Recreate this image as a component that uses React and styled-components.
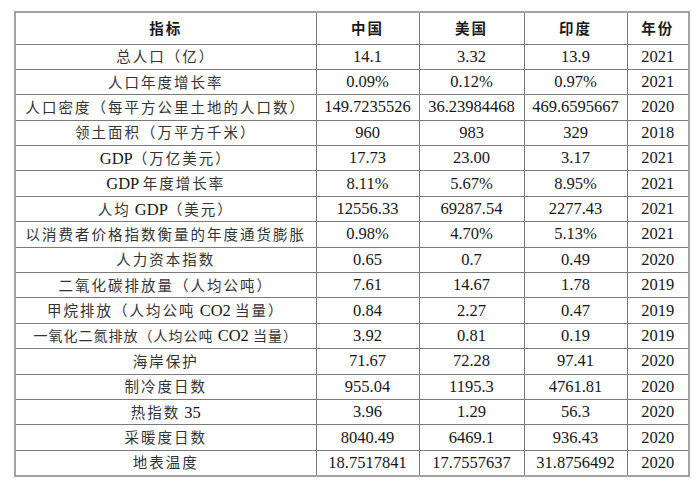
import React from "react";
import styled, { createGlobalStyle } from "styled-components";

const Global = createGlobalStyle`
  html, body { margin: 0; padding: 0; background: #ffffff; }
  body { font-family: "Liberation Serif", "Noto Sans CJK SC", serif; color: #1a1a1a; }
`;

const Page = styled.div`
  width: 700px;
  height: 488px;
  box-sizing: border-box;
  padding: 11px 12px 0 14px;
`;

const Table = styled.table`
  width: 674px;
  border-collapse: collapse;
  table-layout: fixed;
  border: 2px solid #a3a3a3;
`;

const Col = styled.col`
  width: ${(p) => p.$w}px;
`;

const HeadRow = styled.tr`
  height: 32px;
`;

const Row = styled.tr`
  height: 25.4px;
`;

const Cell = styled.td`
  border: 1px solid #7a7a7a;
  padding: 0;
  text-align: center;
  vertical-align: middle;
  font-size: 16.5px;
  line-height: 20px;
  white-space: nowrap;
  overflow: hidden;
  color: #161616;
`;

const HeadCell = styled.th`
  border: 1px solid #7a7a7a;
  padding: 0;
  text-align: center;
  vertical-align: middle;
  font-size: 16.5px;
  line-height: 20px;
  font-weight: 700;
  color: #1a1a1a;
`;

const Han = styled.span`
  font-family: "Noto Sans CJK SC", sans-serif;
  font-size: ${(p) => (p.$tight ? "14px" : "14.5px")};
  letter-spacing: ${(p) => (p.$tight ? "1px" : "2px")};
  font-weight: ${(p) => (p.$bold ? 700 : 400)};
  color: ${(p) => (p.$bold ? "#1a1a1a" : "#333333")};
`;

const hanRe = /([\u3000-\u303f\u4e00-\u9fff\uff00-\uffef]+)/;

function Mixed({ text, bold, tight }) {
  const parts = text.split(hanRe).filter((s) => s.length);
  return parts.map((s, i) =>
    hanRe.test(s) ? (
      <Han key={i} $bold={bold} $tight={tight}>
        {s}
      </Han>
    ) : (
      <span key={i}>{s}</span>
    )
  );
}

const rows = [
  ["总人口（亿）", "14.1", "3.32", "13.9", "2021"],
  ["人口年度增长率", "0.09%", "0.12%", "0.97%", "2021"],
  ["人口密度（每平方公里土地的人口数）", "149.7235526", "36.23984468", "469.6595667", "2020"],
  ["领土面积（万平方千米）", "960", "983", "329", "2018"],
  ["GDP（万亿美元）", "17.73", "23.00", "3.17", "2021"],
  ["GDP 年度增长率", "8.11%", "5.67%", "8.95%", "2021"],
  ["人均 GDP（美元）", "12556.33", "69287.54", "2277.43", "2021"],
  ["以消费者价格指数衡量的年度通货膨胀", "0.98%", "4.70%", "5.13%", "2021"],
  ["人力资本指数", "0.65", "0.7", "0.49", "2020"],
  ["二氧化碳排放量（人均公吨）", "7.61", "14.67", "1.78", "2019"],
  ["甲烷排放（人均公吨 CO2 当量）", "0.84", "2.27", "0.47", "2019"],
  ["一氧化二氮排放（人均公吨 CO2 当量）", "3.92", "0.81", "0.19", "2019", true],
  ["海岸保护", "71.67", "72.28", "97.41", "2020"],
  ["制冷度日数", "955.04", "1195.3", "4761.81", "2020"],
  ["热指数 35", "3.96", "1.29", "56.3", "2020"],
  ["采暖度日数", "8040.49", "6469.1", "936.43", "2020"],
  ["地表温度", "18.7517841", "17.7557637", "31.8756492", "2020"],
];

const headers = ["指标", "中国", "美国", "印度", "年份"];
const widths = [301, 103, 105, 103, 62];

export default function App() {
  return (
    <Page>
      <Global />
      <Table>
        <colgroup>
          {widths.map((w, i) => (
            <Col key={i} $w={w} />
          ))}
        </colgroup>
        <thead>
          <HeadRow>
            {headers.map((h) => (
              <HeadCell key={h}>
                <Mixed text={h} bold />
              </HeadCell>
            ))}
          </HeadRow>
        </thead>
        <tbody>
          {rows.map((r) => (
            <Row key={r[0]}>
              {r.slice(0, 5).map((c, i) => (
                <Cell key={i}>
                  <Mixed text={c} tight={r[5] === true} />
                </Cell>
              ))}
            </Row>
          ))}
        </tbody>
      </Table>
    </Page>
  );
}
